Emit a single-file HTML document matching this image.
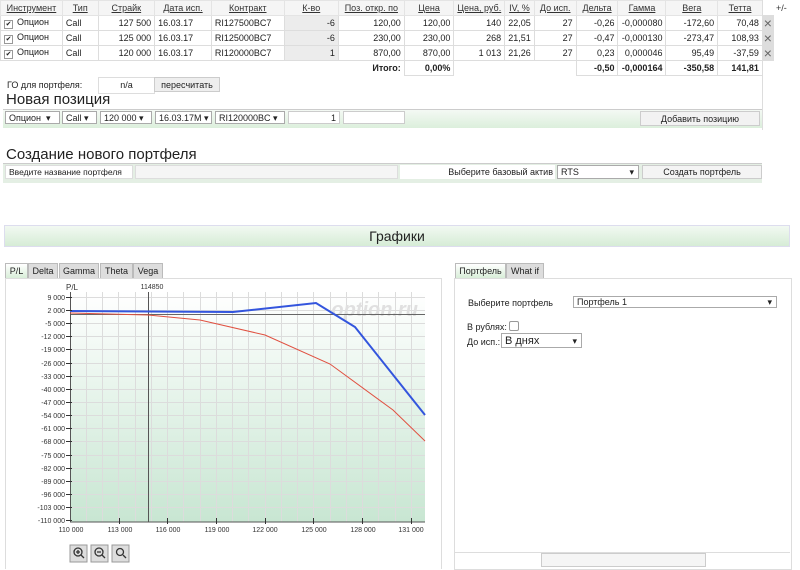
<!DOCTYPE html>
<html><head><meta charset="utf-8"><style>
body{margin:0;width:800px;height:563px;overflow:hidden;background:#fff;font-family:"Liberation Sans",sans-serif;font-size:9px;color:#222;position:relative}
.a{position:absolute}
table{border-collapse:collapse;position:absolute;left:0;top:0;table-layout:fixed}
td,th{font-size:9px;height:14px;padding:0 3px;white-space:nowrap;border:1px solid #ddd}
th{font-weight:normal;text-decoration:underline;color:#333;background:#f5f5f5;border:1px solid #e4e4e4}
td.r{text-align:right}
td.g{background:#ececec}
.cb{display:inline-block;width:7px;height:7px;border:1px solid #999;font-size:7px;line-height:7px;text-align:center;margin-right:4px;vertical-align:-1px}
.x{background:#ddd;color:#666;text-align:center;font-size:14px;line-height:12px;padding:0}
.sel{position:absolute;border:1px solid #aaa;background:#fff;height:13px;font-size:9px;line-height:13px;padding-left:3px;box-sizing:border-box}
.btn{position:absolute;border:1px solid #ccc;background:#eee;font-size:9px;text-align:center;box-sizing:border-box}
.tab{position:absolute;top:263px;height:16px;border:1px solid #bbb;background:#ddd;font-size:9px;line-height:15px;text-align:center;box-sizing:border-box}
</style></head><body>
<table>
<colgroup><col width=62><col width=36><col width=57><col width=57><col width=73><col width=55><col width=66><col width=50><col width=50><col width=28><col width=42><col width=42><col width=48><col width=52><col width=45><col width=11><col width=27></colgroup>
<tr><th>Инструмент</th><th>Тип</th><th>Страйк</th><th>Дата исп.</th><th>Контракт</th><th>К-во</th><th>Поз. откр. по</th><th>Цена</th><th>Цена, руб.</th><th>IV, %</th><th>До исп.</th><th>Дельта</th><th>Гамма</th><th>Вега</th><th>Тетта</th><th colspan=2 style="text-decoration:none;background:#fff;border:none">+/-</th></tr>
<tr><td><span class=cb>✔</span>Опцион</td><td>Call</td><td class=r>127 500</td><td>16.03.17</td><td>RI127500BC7</td><td class="r g">-6</td><td class=r>120,00</td><td class=r>120,00</td><td class=r>140</td><td class=r>22,05</td><td class=r>27</td><td class=r>-0,26</td><td class=r>-0,000080</td><td class=r>-172,60</td><td class=r>70,48</td><td class=x>×</td><td style="border:none"></td></tr>
<tr><td><span class=cb>✔</span>Опцион</td><td>Call</td><td class=r>125 000</td><td>16.03.17</td><td>RI125000BC7</td><td class="r g">-6</td><td class=r>230,00</td><td class=r>230,00</td><td class=r>268</td><td class=r>21,51</td><td class=r>27</td><td class=r>-0,47</td><td class=r>-0,000130</td><td class=r>-273,47</td><td class=r>108,93</td><td class=x>×</td><td style="border:none"></td></tr>
<tr><td><span class=cb>✔</span>Опцион</td><td>Call</td><td class=r>120 000</td><td>16.03.17</td><td>RI120000BC7</td><td class="r g">1</td><td class=r>870,00</td><td class=r>870,00</td><td class=r>1 013</td><td class=r>21,26</td><td class=r>27</td><td class=r>0,23</td><td class=r>0,000046</td><td class=r>95,49</td><td class=r>-37,59</td><td class=x>×</td><td style="border:none"></td></tr>
<tr style="font-weight:bold"><td colspan=7 class=r style="border:none;font-weight:bold">Итого:</td><td class=r style="font-weight:bold">0,00%</td><td colspan=3 style="border:none"></td><td class=r style="font-weight:bold">-0,50</td><td class=r style="font-weight:bold">-0,000164</td><td class=r style="font-weight:bold">-350,58</td><td class=r style="font-weight:bold">141,81</td><td colspan=2 style="border:none"></td></tr>
</table>
<div class=a style="left:762px;top:0;width:1px;height:130px;background:#ddd"></div>
<div class=a style="left:7px;top:80px">ГО для портфеля:</div>
<div class=a style="left:98px;top:77px;width:55px;height:15px;border:1px solid #ddd;text-align:center;line-height:15px">n/a</div>
<div class="btn" style="left:154px;top:77px;width:66px;height:15px;line-height:14px">пересчитать</div>
<div class=a style="left:6px;top:91px;font-size:15px">Новая позиция</div>
<div class=a style="left:3px;top:109px;width:759px;height:18px;background:linear-gradient(#f4f9f4,#dcefdc);border-top:1px solid #ccc"></div>
<div class=sel style="left:5px;top:111px;width:55px">Опцион&nbsp;&nbsp;▾</div>
<div class=sel style="left:62px;top:111px;width:35px">Call ▾</div>
<div class=sel style="left:100px;top:111px;width:52px">120 000 ▾</div>
<div class=sel style="left:155px;top:111px;width:57px">16.03.17M ▾</div>
<div class=sel style="left:215px;top:111px;width:70px">RI120000BC ▾</div>
<div class=a style="left:288px;top:111px;width:52px;height:13px;background:#fff;border:1px solid #ccc;text-align:right;padding-right:3px;box-sizing:border-box;line-height:12px">1</div>
<div class=a style="left:343px;top:111px;width:62px;height:13px;background:#fff;border:1px solid #ccc;box-sizing:border-box"></div>
<div class=btn style="left:640px;top:111px;width:120px;height:15px;line-height:14px;background:#f2f2f2">Добавить позицию</div>
<div class=a style="left:6px;top:146px;font-size:15px">Создание нового портфеля</div>
<div class=a style="left:3px;top:163px;width:759px;height:19px;background:#e4efe4;border-top:1px solid #ccc"></div>
<div class=a style="left:5px;top:165px;width:128px;height:14px;background:#fff;border:1px solid #ddd;line-height:13px;padding-left:3px;box-sizing:border-box;font-size:8.5px">Введите название портфеля</div>
<div class=a style="left:135px;top:165px;width:263px;height:14px;background:#f5f5f5;border:1px solid #ddd;box-sizing:border-box"></div>
<div class=a style="left:400px;top:165px;width:155px;height:14px;background:#fff;text-align:right;line-height:14px;padding-right:2px;box-sizing:border-box">Выберите базовый актив</div>
<div class=sel style="left:557px;top:165px;width:82px;height:14px">RTS<span style="float:right;margin-right:4px">▾</span></div>
<div class=btn style="left:642px;top:165px;width:120px;height:14px;line-height:13px;background:#f4f4f4">Создать портфель</div>
<div class=a style="left:4px;top:225px;width:786px;height:22px;background:linear-gradient(#f2f9f2,#d6ecd6);border:1px solid #dde;box-sizing:border-box;text-align:center;font-size:14px;line-height:21px">Графики</div>
<div class=tab style="left:5px;width:23px;background:linear-gradient(#fff,#d8eed8)">P/L</div>
<div class=tab style="left:28px;width:30px">Delta</div>
<div class=tab style="left:59px;width:40px">Gamma</div>
<div class=tab style="left:100px;width:33px">Theta</div>
<div class=tab style="left:133px;width:30px">Vega</div>
<div class=a style="left:5px;top:278px;width:435px;height:290px;border:1px solid #ddd;border-bottom:none"></div>
<svg class=a style="left:0;top:278px" width="440" height="285" viewBox="0 278 440 285">
<defs><linearGradient id="bg" x1="0" y1="0" x2="0" y2="1"><stop offset="0" stop-color="#fff"/><stop offset="1" stop-color="#c8e6d2"/></linearGradient></defs>
<rect x="70" y="292" width="355" height="230" fill="url(#bg)"/>
<g stroke="#dcdcdc" stroke-width="1">
<path d="M86.5 292V522M102.5 292V522M118.5 292V522M135.5 292V522M151.5 292V522M167.5 292V522M183.5 292V522M200.5 292V522M216.5 292V522M232.5 292V522M248.5 292V522M265.5 292V522M281.5 292V522M297.5 292V522M313.5 292V522M330.5 292V522M346.5 292V522M362.5 292V522M378.5 292V522M395.5 292V522M411.5 292V522"/>
<path d="M70 297.5H425M70 310.5H425M70 323.5H425M70 336.5H425M70 349.5H425M70 363.5H425M70 376.5H425M70 389.5H425M70 402.5H425M70 415.5H425M70 428.5H425M70 441.5H425M70 455.5H425M70 468.5H425M70 481.5H425M70 494.5H425M70 507.5H425"/>
</g>
<text x="418" y="316" font-size="20" font-style="italic" font-weight="bold" fill="#e0e0e0" text-anchor="end" font-family="Liberation Sans">option.ru</text>
<path d="M70 314.5H425" stroke="#666"/>
<path d="M70.5 292V522H425M148.5 292V522" stroke="#555" fill="none"/>
<path d="M70 311L233 312L316 303L355 327L425 415" stroke="#3355dd" stroke-width="2" fill="none"/>
<path d="M70 313L148 315L200 320L265 335L330 364L393 410L425 441" stroke="#e05040" stroke-width="1" fill="none"/>
<g font-size="7" fill="#333" text-anchor="end" font-family="Liberation Sans">
<text x="65" y="300">9 000</text><text x="65" y="313">2 000</text><text x="65" y="326">-5 000</text><text x="65" y="339">-12 000</text><text x="65" y="352">-19 000</text><text x="65" y="366">-26 000</text><text x="65" y="379">-33 000</text><text x="65" y="392">-40 000</text><text x="65" y="405">-47 000</text><text x="65" y="418">-54 000</text><text x="65" y="431">-61 000</text><text x="65" y="444">-68 000</text><text x="65" y="458">-75 000</text><text x="65" y="471">-82 000</text><text x="65" y="484">-89 000</text><text x="65" y="497">-96 000</text><text x="65" y="510">-103 000</text><text x="65" y="523">-110 000</text>
</g>
<g stroke="#333"><path d="M66 297.5h6M66 310.5h6M66 323.5h6M66 336.5h6M66 349.5h6M66 363.5h6M66 376.5h6M66 389.5h6M66 402.5h6M66 415.5h6M66 428.5h6M66 441.5h6M66 455.5h6M66 468.5h6M66 481.5h6M66 494.5h6M66 507.5h6M66 520.5h6M119.5 518v6M167.5 518v6M216.5 518v6M265.5 518v6M313.5 518v6M362.5 518v6M411.5 518v6"/></g>
<g font-size="7" fill="#333" text-anchor="middle" font-family="Liberation Sans">
<text x="71" y="532">110 000</text><text x="120" y="532">113 000</text><text x="168" y="532">116 000</text><text x="217" y="532">119 000</text><text x="265" y="532">122 000</text><text x="314" y="532">125 000</text><text x="363" y="532">128 000</text><text x="411" y="532">131 000</text>
<text x="72" y="290" font-size="8">P/L</text><text x="152" y="289">114850</text>
</g>
<g fill="#ddd" stroke="#999"><rect x="70" y="545" width="17" height="17"/><rect x="91" y="545" width="17" height="17"/><rect x="112" y="545" width="17" height="17"/></g>
<g stroke="#333" fill="none" stroke-width="1.3"><circle cx="78" cy="552" r="4"/><path d="M81 555l3 3M76 552h4M78 550v4"/><circle cx="99" cy="552" r="4"/><path d="M102 555l3 3M97 552h4"/><circle cx="120" cy="552" r="3.5"/><path d="M123 555l3 3"/></g>
</svg>
<div class=tab style="left:455px;width:51px;background:linear-gradient(#fff,#d8eed8)">Портфель</div>
<div class=tab style="left:506px;width:38px">What if</div>
<div class=a style="left:454px;top:278px;width:336px;height:290px;border:1px solid #ddd"></div>
<div class=a style="left:454px;top:552px;width:336px;height:1px;background:#ddd"></div>
<div class=a style="left:541px;top:553px;width:163px;height:12px;border:1px solid #ccc;background:#f5f5f5"></div>
<div class=a style="left:468px;top:298px">Выберите портфель</div>
<div class=sel style="left:573px;top:296px;width:204px;height:12px;line-height:11px">Портфель 1<span style="float:right;margin-right:4px">▾</span></div>
<div class=a style="left:467px;top:321px">В рублях: <span style="display:inline-block;width:8px;height:8px;border:1px solid #999;border-radius:2px;vertical-align:-1px"></span></div>
<div class=a style="left:467px;top:337px">До исп.:</div>
<div class=sel style="left:501px;top:333px;width:81px;height:15px;font-size:11px;line-height:14px">В днях<span style="float:right;margin-right:4px;font-size:9px">▾</span></div>
</body></html>
